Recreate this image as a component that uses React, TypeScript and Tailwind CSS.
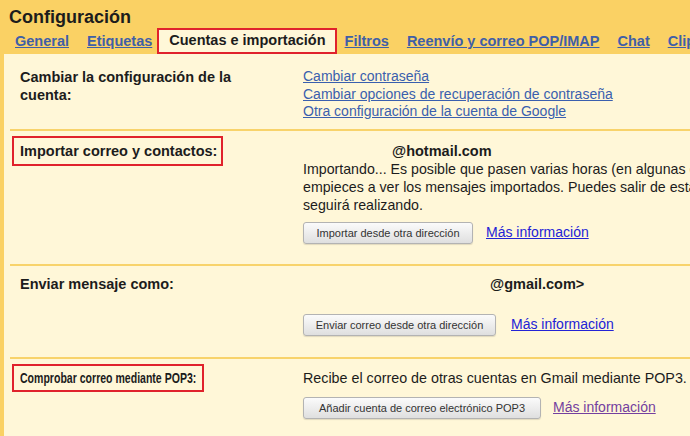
import React from 'react';

const tabs = ['General', 'Etiquetas', 'Cuentas e importación', 'Filtros', 'Reenvío y correo POP/IMAP', 'Chat', 'Clips web'];
const ACTIVE_TAB = 2;

function GrayButton({ label, width }: { label: string; width: string }) {
  return (
    <button
      type="button"
      className={`${width} h-[22px] shrink-0 rounded-[3px] border border-[#b3b3b3] bg-gradient-to-b from-[#fbfbfb] to-[#dfdfdf] text-center text-[11px] leading-[20px] text-[#333] shadow-[0_1px_1px_rgba(0,0,0,0.12)]`}
    >
      {label}
    </button>
  );
}

function MoreInfo({ visited = false }: { visited?: boolean }) {
  return (
    <a
      href="#"
      className={`-mt-[2px] text-[14px] leading-[18px] underline ${visited ? 'text-[#74409f]' : 'text-[#2323d6]'}`}
    >
      Más información
    </a>
  );
}

function Boxed({ children }: { children: React.ReactNode }) {
  // red highlight drawn around the label, does not push the line
  return (
    <span className="-ml-[8px] border-2 border-[#e0222c] py-[5px] pl-[6px] pr-[4px]">{children}</span>
  );
}

export default function App() {
  return (
    <div className="h-[436px] w-[690px] overflow-hidden bg-[#fff7d8] font-['Liberation_Sans',Arial,sans-serif] text-[#1c1c1c]">
      {/* Header */}
      <div className="bg-[#fad164] pt-[6px]">
        <h1 className="pl-[9px] text-[18px] font-bold leading-[22px]">Configuración</h1>
        <nav className="flex h-[26px] items-stretch whitespace-nowrap pl-[6px] text-[14.5px] font-bold">
          {tabs.map((t, i) =>
            i === ACTIVE_TAB ? (
              <span
                key={t}
                className="-ml-[4px] -mr-[1px] flex items-center border-2 border-[#e0222c] bg-[#fff7d8] pl-[10px] pr-[9px]"
              >
                {t}
              </span>
            ) : (
              <a key={t} href="#" className="flex items-center px-[9px] pt-[1px] text-[#3f5fa7] underline">
                {t}
              </a>
            )
          )}
        </nav>
      </div>

      {/* Content */}
      <div className="border-l-[4px] border-[#fad164]">
        <section className="ml-[6px] grid grid-cols-[293px_1fr] border-b-2 border-[#f8d36b] pb-[8px] pt-[14px]">
          <div className="pl-[10px] text-[14.5px] font-bold leading-[18px]">
            Cambiar la configuración de la
            <br />
            cuenta:
          </div>
          <div className="flex flex-col items-start text-[14px] leading-[17.5px] text-[#3a5fae]">
            <a href="#" className="underline">Cambiar contraseña</a>
            <a href="#" className="underline">Cambiar opciones de recuperación de contraseña</a>
            <a href="#" className="underline">Otra configuración de la cuenta de Google</a>
          </div>
        </section>

        <section className="ml-[6px] grid grid-cols-[293px_1fr] border-b-2 border-[#f8d36b] pb-[20px] pt-[11px]">
          <div className="pl-[10px] text-[14.5px] font-bold leading-[18px]">
            <Boxed>Importar correo y contactos:</Boxed>
          </div>
          <div className="text-[14.2px] leading-[18px]">
            <div className="pl-[89px] text-[14.5px] font-bold">@hotmail.com</div>
            <div className="whitespace-nowrap">
              Importando... Es posible que pasen varias horas (en algunas ocasiones, hasta dos días) hasta que
            </div>
            <div className="whitespace-nowrap">
              empieces a ver los mensajes importados. Puedes salir de esta página y la importación se
            </div>
            <div>seguirá realizando.</div>
            <div className="mt-[8px] flex items-center gap-[13px]">
              <GrayButton label="Importar desde otra dirección" width="w-[170px]" />
              <MoreInfo />
            </div>
          </div>
        </section>

        <section className="ml-[6px] grid grid-cols-[293px_1fr] border-b-2 border-[#f8d36b] pb-[21px] pt-[9px]">
          <div className="pl-[10px] text-[14.5px] font-bold leading-[18px]">Enviar mensaje como:</div>
          <div className="text-[14.2px] leading-[18px]">
            <div className="pl-[187px] text-[14.5px] font-bold">@gmail.com&gt;</div>
            <div className="mt-[21px] flex items-center gap-[15px]">
              <GrayButton label="Enviar correo desde otra dirección" width="w-[193px]" />
              <MoreInfo />
            </div>
          </div>
        </section>

        <section className="ml-[6px] grid grid-cols-[293px_1fr] pb-[20px] pt-[10px]">
          <div className="pl-[10px] text-[15.5px] font-bold leading-[18px]">
            {/* this label is narrower in the source shot, so it is squeezed to fit its box */}
            <span className="-my-[5px] -ml-[8px] inline-block w-[192px] overflow-hidden whitespace-nowrap border-2 border-[#e0222c] py-[3px] pl-[6px] align-top">
              <span className="inline-block origin-left scale-x-[0.68]">Comprobar correo mediante POP3:</span>
            </span>
          </div>
          <div className="text-[14.3px] leading-[18px]">
            <div className="whitespace-nowrap">Recibe el correo de otras cuentas en Gmail mediante POP3.</div>
            <div className="mt-[10px] flex items-center gap-[12px]">
              <GrayButton label="Añadir cuenta de correo electrónico POP3" width="w-[238px]" />
              <MoreInfo visited />
            </div>
          </div>
        </section>
      </div>
    </div>
  );
}
